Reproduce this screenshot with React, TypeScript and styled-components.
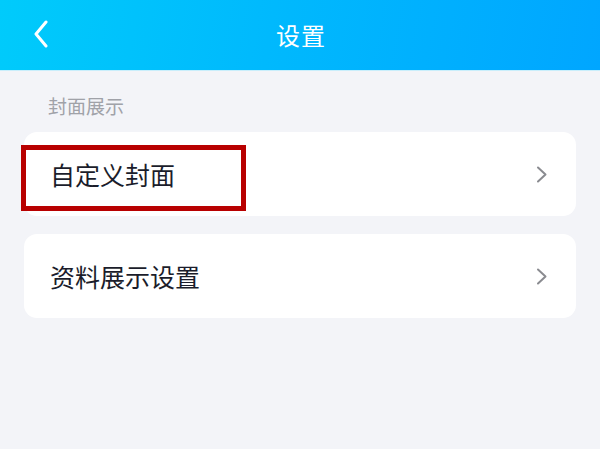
import styled, { createGlobalStyle } from "styled-components";

const GlobalStyle = createGlobalStyle`
  html, body {
    margin: 0;
    padding: 0;
    background: #f3f4f8;
    font-family: "Noto Sans CJK SC", "Noto Sans", sans-serif;
  }
`;

const Page = styled.div`
  width: 600px;
  height: 449px;
  background: #f3f4f8;
  overflow: hidden;
`;

const Header = styled.div`
  height: 70px;
  display: flex;
  align-items: center;
  justify-content: center;
  position: relative;
  background: linear-gradient(100deg, #00cbfb 0%, #00b9fd 45%, #00a6ff 100%);
  border-bottom: 1px solid #c9eefb;
  color: #fff;
`;

const BackButton = styled.div`
  position: absolute;
  left: 33px;
  top: 20px;
  width: 16px;
  height: 28px;
  display: flex;
`;

const Title = styled.div`
  font-size: 24px;
  letter-spacing: 1px;
  margin-top: -2px;
  margin-left: 2px;
`;

const Content = styled.div`
  padding: 23px 24px 0;
  display: flex;
  flex-direction: column;
`;

const SectionLabel = styled.div`
  font-size: 19px;
  color: #a0a2a8;
  padding-left: 24px;
  line-height: 24px;
  margin-bottom: 14px;
`;

const Card = styled.div<{ $gap?: number }>`
  position: relative;
  height: 84px;
  background: #fff;
  border-radius: 13px;
  display: flex;
  align-items: center;
  justify-content: space-between;
  padding: 0 28px 0 26px;
  margin-bottom: ${(p) => p.$gap ?? 0}px;
`;

const CardText = styled.div`
  font-size: 25px;
  color: #1b1d2b;
  margin-top: -1px;
`;

const Highlight = styled.div`
  position: absolute;
  left: -3px;
  top: 13px;
  width: 225px;
  height: 66px;
  box-sizing: border-box;
  border: 5px solid #b80000;
  pointer-events: none;
`;

const Chevron = () => (
  <svg width="12" height="17" viewBox="0 0 12 17">
    <path d="M2 1.5 L9.5 8.5 L2 15.5" fill="none" stroke="#8a8b90" strokeWidth="2" strokeLinecap="round" strokeLinejoin="round" />
  </svg>
);

export default function App() {
  return (
    <Page>
      <GlobalStyle />
      <Header>
        <BackButton>
          <svg width="16" height="28" viewBox="0 0 16 28">
            <path d="M13 2 L3 14 L13 26" fill="none" stroke="#fff" strokeWidth="3" strokeLinecap="round" strokeLinejoin="round" />
          </svg>
        </BackButton>
        <Title>设置</Title>
      </Header>
      <Content>
        <SectionLabel>封面展示</SectionLabel>
        <Card $gap={18}>
          <CardText>自定义封面</CardText>
          <Chevron />
          <Highlight />
        </Card>
        <Card>
          <CardText>资料展示设置</CardText>
          <Chevron />
        </Card>
      </Content>
    </Page>
  );
}
